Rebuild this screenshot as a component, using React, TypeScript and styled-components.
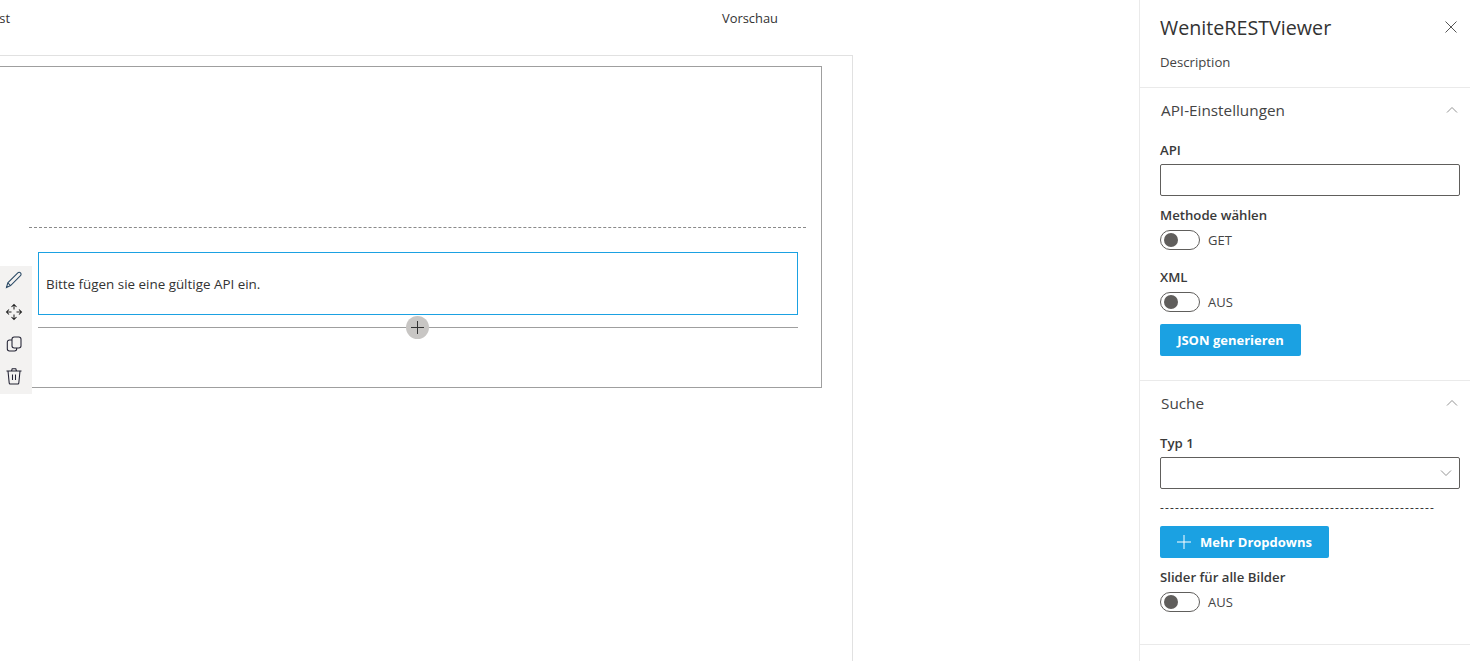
import React from "react";
import styled, { createGlobalStyle } from "styled-components";

const Global = createGlobalStyle`
  html, body { margin: 0; padding: 0; height: 100%; overflow: hidden; background: #fff; }
  body { font-family: "Open Sans", "Noto Sans", sans-serif; color: #333; }
  #root { height: 100%; }
`;

const Page = styled.div`
  display: flex;
  width: 1470px;
  height: 661px;
  overflow: hidden;
`;
const Workspace = styled.main`
  width: 1139px;
  display: flex;
  flex-direction: column;
`;
const TopBar = styled.header`
  height: 55px;
  font-size: 12.9px;
  line-height: 37px;
  display: flex;
  justify-content: space-between;
  padding-right: 361px;
  overflow: hidden;
`;
const CutTab = styled.span`
  margin-left: -15px;
`;
const Canvas = styled.div`
  width: 853px;
  flex: 1;
  box-sizing: border-box;
  border-top: 1px solid #e1e1e1;
  border-right: 1px solid #e1e1e1;
  padding: 10px 30px 0 0;
`;
const Section = styled.section`
  height: 322px;
  box-sizing: border-box;
  border: 1px solid #9f9f9f;
  border-left: 0;
  position: relative;
  display: flex;
  flex-direction: column;
  padding: 160px 15px 0 29px;
`;
const Dashed = styled.div`
  border-top: 1px dashed #8a8a8a;
`;
const Column = styled.div`
  margin: 24px 8px 0 9px;
`;
const WebPart = styled.div`
  height: 63px;
  box-sizing: border-box;
  border: 1px solid #1ba1e2;
  display: flex;
  align-items: center;
  padding: 0 0 0 7px;
  font-size: 13.4px;
  color: #333;
`;
const AddLine = styled.div`
  margin-top: 12px;
  border-top: 1px solid #9f9f9f;
  position: relative;
`;
const AddButton = styled.div`
  position: absolute;
  left: 368px;
  top: -12px;
  width: 23px;
  height: 23px;
  border-radius: 50%;
  background: #c8c6c4;
  display: flex;
  align-items: center;
  justify-content: center;
`;
const Tools = styled.div`
  position: absolute;
  left: 0;
  top: 199px;
  width: 32px;
  height: 128px;
  background: #f3f2f1;
  display: flex;
  flex-direction: column;
  align-items: flex-start;
`;
const ToolSlot = styled.div`
  height: 32px;
  width: 28px;
  box-sizing: border-box;
  padding-bottom: 4px;
  display: flex;
  align-items: center;
  justify-content: center;
`;

const Panel = styled.aside`
  width: 331px;
  box-sizing: border-box;
  border-left: 1px solid #eaeaea;
  display: flex;
  flex-direction: column;
`;
const PanelHead = styled.div`
  height: 88px;
  box-sizing: border-box;
  border-bottom: 1px solid #eaeaea;
  padding: 13px 13px 0 20px;
`;
const TitleRow = styled.div`
  display: flex;
  justify-content: space-between;
  align-items: center;
  height: 28px;
`;
const Title = styled.h1`
  margin: 0;
  font-size: 19.7px;
  font-weight: 400;
  color: #333;
`;
const Desc = styled.div`
  margin-top: 12px;
  font-size: 13.2px;
  line-height: 18px;
  color: #444;
`;
const Group = styled.div<{ $height: number }>`
  height: ${(p) => p.$height}px;
  box-sizing: border-box;
  border-bottom: 1px solid #eaeaea;
  padding: 0 10px 0 20px;
`;
const GroupHead = styled.div`
  height: 44px;
  display: flex;
  align-items: center;
  justify-content: space-between;
  padding: 0 1px 0 1px;
  font-size: 15.3px;
  color: #444;
`;
const Label = styled.div`
  font-size: 13.2px;
  font-weight: 600;
  line-height: 18px;
  color: #3a3a3a;
`;
const TextBox = styled.div`
  width: 300px;
  height: 32px;
  box-sizing: border-box;
  border: 1px solid #605e5c;
  border-radius: 2px;
  margin-top: 5px;
`;
const SelectBox = styled(TextBox)`
  display: flex;
  align-items: center;
  justify-content: flex-end;
  padding-right: 6px;
`;
const ToggleRow = styled.div`
  display: flex;
  align-items: center;
  gap: 8px;
  height: 20px;
  margin-top: 6px;
  font-size: 13px;
  color: #444;
`;
const Track = styled.div`
  width: 40px;
  height: 20px;
  box-sizing: border-box;
  border: 1px solid #605e5c;
  border-radius: 10px;
  padding: 2px 3px;
`;
const Knob = styled.div`
  width: 14px;
  height: 14px;
  border-radius: 50%;
  background: #605e5c;
`;
const Field = styled.div<{ $top: number }>`
  margin-top: ${(p) => p.$top}px;
`;
const Primary = styled.div<{ $width: number }>`
  width: ${(p) => p.$width}px;
  height: 32px;
  border-radius: 2px;
  background: #1ba1e2;
  color: #fff;
  font-size: 13px;
  font-weight: 700;
  display: flex;
  align-items: center;
  justify-content: center;
  gap: 9px;
`;
const DashText = styled.div`
  margin-top: 10px;
  font-size: 12px;
  line-height: 18px;
  letter-spacing: 1.14px;
  color: #333;
  white-space: nowrap;
`;

const Chevron = ({ up }: { up?: boolean }) => (
  <svg width="14" height="14" viewBox="0 0 14 14" fill="none" stroke="#888" strokeWidth="0.9">
    <path d={up ? "M2 9.5 7 4.5 12 9.5" : "M2 4.5 7 9.5 12 4.5"} />
  </svg>
);

const Toggle = ({ text }: { text: string }) => (
  <ToggleRow>
    <Track>
      <Knob />
    </Track>
    {text}
  </ToggleRow>
);

export default function App() {
  return (
    <Page>
      <Global />
      <Workspace>
        <TopBar>
          <CutTab>Test</CutTab>
          <span>Vorschau</span>
        </TopBar>
        <Canvas>
          <Section>
            <Dashed />
            <Column>
              <WebPart>Bitte fügen sie eine gültige API ein.</WebPart>
              <AddLine>
                <AddButton>
                  <svg width="13" height="13" viewBox="0 0 13 13" fill="none" stroke="#333" strokeWidth="1">
                    <path d="M6.5 0v13M0 6.5h13" />
                  </svg>
                </AddButton>
              </AddLine>
            </Column>
            <Tools>
              <ToolSlot>
                <svg width="18" height="18" viewBox="0 0 18 18" fill="none" stroke="#2b4a66" strokeWidth="1.05">
                  <path d="M1.5 16.5 2.8 11.8 12.8 1.9a1.9 1.9 0 0 1 2.7 0 1.9 1.9 0 0 1 0 2.7L5.6 14.6 1.5 16.5ZM2.8 11.8l2.8 2.8" />
                </svg>
              </ToolSlot>
              <ToolSlot>
                <svg width="18" height="18" viewBox="0 0 18 18" fill="none" stroke="#222" strokeWidth="1.05">
                  <path d="M6.5 4 9 1.5 11.5 4M6.5 14 9 16.5 11.5 14M4 6.5 1.5 9 4 11.5M14 6.5 16.5 9 14 11.5M9 1.5v5M9 11.5v5M1.5 9h5M11.5 9h5" />
                </svg>
              </ToolSlot>
              <ToolSlot>
                <svg width="18" height="18" viewBox="0 0 18 18" fill="none" stroke="#223" strokeWidth="1.05">
                  <rect x="7" y="2" width="9" height="11" rx="2.2" />
                  <path d="M7 5H4.5a2.2 2.2 0 0 0-2.2 2.2v6.5a2.2 2.2 0 0 0 2.2 2.2h5a2.2 2.2 0 0 0 2.2-2.2V13" />
                </svg>
              </ToolSlot>
              <ToolSlot>
                <svg width="18" height="18" viewBox="0 0 18 18" fill="none" stroke="#223" strokeWidth="1.05">
                  <path d="M1.5 4h15M6.5 4l.7-2.2h3.6l.7 2.2M3 4l1.2 12a1 1 0 0 0 1 1h7.6a1 1 0 0 0 1-1L15 4M7.5 7.5v5.5M10.5 7.5v5.5" />
                </svg>
              </ToolSlot>
            </Tools>
          </Section>
        </Canvas>
      </Workspace>
      <Panel>
        <PanelHead>
          <TitleRow>
            <Title>WeniteRESTViewer</Title>
            <svg width="12" height="12" viewBox="0 0 12 12" fill="none" stroke="#555" strokeWidth="1">
              <path d="M.5.5l11 11M11.5.5l-11 11" />
            </svg>
          </TitleRow>
          <Desc>Description</Desc>
        </PanelHead>
        <Group $height={293}>
          <GroupHead>
            API-Einstellungen
            <Chevron up />
          </GroupHead>
          <Field $top={9}>
            <Label>API</Label>
            <TextBox />
          </Field>
          <Field $top={10}>
            <Label>Methode wählen</Label>
            <Toggle text="GET" />
          </Field>
          <Field $top={18}>
            <Label>XML</Label>
            <Toggle text="AUS" />
          </Field>
          <Field $top={12}>
            <Primary $width={141}>JSON generieren</Primary>
          </Field>
        </Group>
        <Group $height={264}>
          <GroupHead>
            Suche
            <Chevron up />
          </GroupHead>
          <Field $top={9}>
            <Label>Typ 1</Label>
            <SelectBox>
              <Chevron />
            </SelectBox>
          </Field>
          <DashText>-------------------------------------------------------</DashText>
          <Field $top={9}>
            <Primary $width={169}>
              <svg width="14" height="14" viewBox="0 0 14 14" fill="none" stroke="#fff" strokeWidth="1">
                <path d="M7 0v14M0 7h14" />
              </svg>
              Mehr Dropdowns
            </Primary>
          </Field>
          <Field $top={10}>
            <Label>Slider für alle Bilder</Label>
            <Toggle text="AUS" />
          </Field>
        </Group>
      </Panel>
    </Page>
  );
}
